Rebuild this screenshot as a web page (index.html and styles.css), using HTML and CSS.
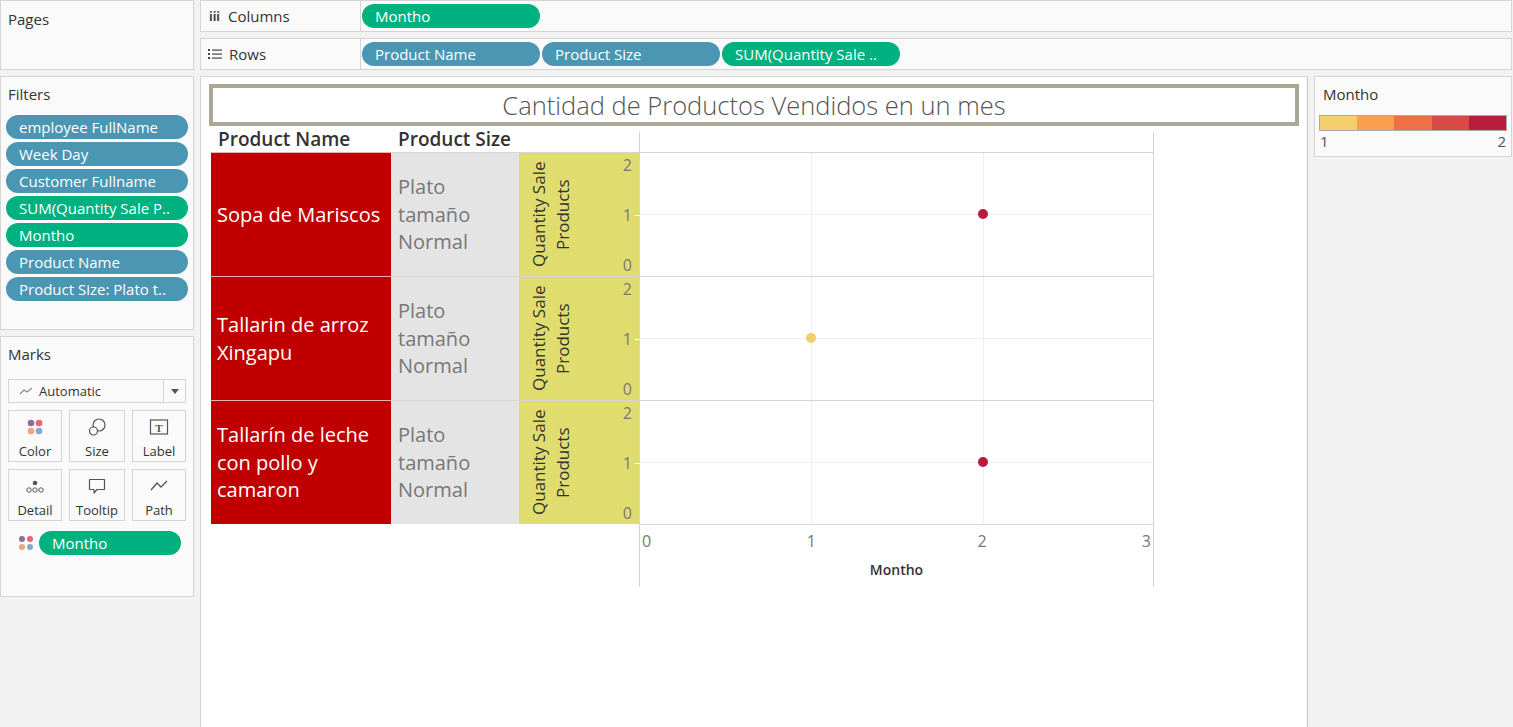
FILE: index.html
```html
<!DOCTYPE html>
<html lang="es">
<head>
<meta charset="utf-8">
<title>Cantidad de Productos Vendidos en un mes</title>
<link rel="stylesheet" href="styles.css">
</head>
<body>
<div class="app">
  <section class="panel pages">
    <div class="panel-title">Pages</div>
  </section>

  <div class="shelves">
    <div class="shelf">
      <div class="shelf-label"><span class="cols-icon">iii</span>Columns</div>
      <div class="shelf-pills"><span class="pill green">Montho</span></div>
    </div>
    <div class="shelf">
      <div class="shelf-label">
        <svg class="rows-icon" width="14" height="12" viewBox="0 0 14 12"><g fill="#444"><rect x="0" y="1" width="2" height="2"/><rect x="0" y="5" width="2" height="2"/><rect x="0" y="9" width="2" height="2"/><rect x="4" y="1.5" width="10" height="1.2"/><rect x="4" y="5.5" width="10" height="1.2"/><rect x="4" y="9.5" width="10" height="1.2"/></g></svg>Rows
      </div>
      <div class="shelf-pills">
        <span class="pill blue">Product Name</span>
        <span class="pill blue">Product Size</span>
        <span class="pill green">SUM(Quantity Sale ..</span>
      </div>
    </div>
  </div>

  <div class="side">
    <section class="panel filters">
      <div class="panel-title">Filters</div>
      <div class="pill-list">
        <span class="pill blue wide">employee FullName</span>
        <span class="pill blue wide">Week Day</span>
        <span class="pill blue wide">Customer Fullname</span>
        <span class="pill green wide">SUM(Quantity Sale P..</span>
        <span class="pill green wide">Montho</span>
        <span class="pill blue wide">Product Name</span>
        <span class="pill blue wide">Product Size: Plato t..</span>
      </div>
    </section>

    <section class="panel marks">
      <div class="panel-title">Marks</div>
      <div class="mark-select">
        <span class="mark-select-value">
          <svg width="14" height="10" viewBox="0 0 14 10"><polyline points="1,8 5,4 8,6 13,2" fill="none" stroke="#888" stroke-width="1.2"/></svg>
          Automatic
        </span>
        <span class="mark-select-arrow"><svg width="8" height="5" viewBox="0 0 8 5"><polygon points="0,0 8,0 4,5" fill="#555"/></svg></span>
      </div>
      <div class="mark-buttons">
        <div class="mark-btn">
          <svg width="20" height="20" viewBox="0 0 20 20"><circle cx="6" cy="6" r="3.3" fill="#8a6f9b"/><circle cx="14" cy="6" r="3.3" fill="#eb6277"/><circle cx="6" cy="14" r="3.3" fill="#f2a378"/><circle cx="14" cy="14" r="3.3" fill="#80a9d3"/></svg>
          <span>Color</span>
        </div>
        <div class="mark-btn">
          <svg width="20" height="20" viewBox="0 0 20 20"><circle cx="12" cy="8" r="6" fill="none" stroke="#555" stroke-width="1.2"/><circle cx="6.5" cy="14" r="4" fill="#fafafa" stroke="#555" stroke-width="1.2"/></svg>
          <span>Size</span>
        </div>
        <div class="mark-btn">
          <svg width="20" height="20" viewBox="0 0 20 20"><rect x="1.5" y="3" width="17" height="14" fill="none" stroke="#555" stroke-width="1.2"/><text x="10" y="14.5" text-anchor="middle" font-family="Liberation Serif, serif" font-weight="bold" font-size="11" fill="#555">T</text></svg>
          <span>Label</span>
        </div>
        <div class="mark-btn">
          <svg width="20" height="20" viewBox="0 0 20 20"><circle cx="10" cy="7" r="2.3" fill="#555"/><circle cx="4" cy="14" r="2.2" fill="none" stroke="#555" stroke-width="1"/><circle cx="10" cy="14" r="2.2" fill="none" stroke="#555" stroke-width="1"/><circle cx="16" cy="14" r="2.2" fill="none" stroke="#555" stroke-width="1"/></svg>
          <span>Detail</span>
        </div>
        <div class="mark-btn">
          <svg width="20" height="20" viewBox="0 0 20 20"><path d="M2.5 3.5 H17.5 V13.5 H10 L7 17 V13.5 H2.5 Z" fill="none" stroke="#555" stroke-width="1.2" stroke-linejoin="round"/></svg>
          <span>Tooltip</span>
        </div>
        <div class="mark-btn">
          <svg width="20" height="20" viewBox="0 0 20 20"><polyline points="2,14 8,7 12,11 18,5" fill="none" stroke="#555" stroke-width="1.3"/></svg>
          <span>Path</span>
        </div>
      </div>
      <div class="mark-field">
        <svg width="16" height="16" viewBox="0 0 16 16"><circle cx="4" cy="4" r="3" fill="#8a6f9b"/><circle cx="12" cy="4" r="3" fill="#eb6277"/><circle cx="4" cy="12" r="3" fill="#f2a378"/><circle cx="12" cy="12" r="3" fill="#80a9d3"/></svg>
        <span class="pill green field">Montho</span>
      </div>
    </section>
  </div>

  <main class="viz">
    <div class="viz-title">Cantidad de Productos Vendidos en un mes</div>
    <div class="table">
      <div class="hdr">Product Name</div>
      <div class="hdr">Product Size</div>
      <div class="hdr"></div>
      <div class="hdr plot-hdr"></div>

      <div class="cell name">Sopa de Mariscos</div>
      <div class="cell size">Plato<br>tamaño<br>Normal</div>
      <div class="cell axis">
        <div class="axis-title">Quantity Sale<br>Products</div>
        <div class="ticks"><span>2</span><span class="tick-1">1</span><span>0</span></div>
      </div>
      <div class="cell plot">
        <svg width="513" height="123" viewBox="0 0 513 123"><g stroke="#efefef" stroke-width="1"><line x1="171.5" y1="0" x2="171.5" y2="123"/><line x1="343.5" y1="0" x2="343.5" y2="123"/><line x1="0" y1="61.5" x2="513" y2="61.5"/></g><circle cx="343" cy="61" r="5" fill="#b91b3d"/></svg>
      </div>

      <div class="cell name">Tallarin de arroz<br>Xingapu</div>
      <div class="cell size">Plato<br>tamaño<br>Normal</div>
      <div class="cell axis">
        <div class="axis-title">Quantity Sale<br>Products</div>
        <div class="ticks"><span>2</span><span class="tick-1">1</span><span>0</span></div>
      </div>
      <div class="cell plot">
        <svg width="513" height="123" viewBox="0 0 513 123"><g stroke="#efefef" stroke-width="1"><line x1="171.5" y1="0" x2="171.5" y2="123"/><line x1="343.5" y1="0" x2="343.5" y2="123"/><line x1="0" y1="61.5" x2="513" y2="61.5"/></g><circle cx="171" cy="61" r="5" fill="#f3cf6a"/></svg>
      </div>

      <div class="cell name">Tallarín de leche<br>con pollo y<br>camaron</div>
      <div class="cell size">Plato<br>tamaño<br>Normal</div>
      <div class="cell axis">
        <div class="axis-title">Quantity Sale<br>Products</div>
        <div class="ticks"><span>2</span><span class="tick-1">1</span><span>0</span></div>
      </div>
      <div class="cell plot">
        <svg width="513" height="123" viewBox="0 0 513 123"><g stroke="#efefef" stroke-width="1"><line x1="171.5" y1="0" x2="171.5" y2="123"/><line x1="343.5" y1="0" x2="343.5" y2="123"/><line x1="0" y1="61.5" x2="513" y2="61.5"/></g><circle cx="343" cy="61" r="5" fill="#b91b3d"/></svg>
      </div>

      <div class="foot"></div>
      <div class="foot"></div>
      <div class="foot"></div>
      <div class="foot x-axis">
        <div class="x-ticks"><span class="xt t0">0</span><span class="xt t1">1</span><span class="xt t2">2</span><span class="xt t3">3</span></div>
        <div class="x-title">Montho</div>
      </div>
    </div>
  </main>

  <aside class="panel legend">
    <div class="panel-title">Montho</div>
    <div class="legend-bar">
      <span style="background:#f2cf6b"></span>
      <span style="background:#f9a04f"></span>
      <span style="background:#ee7049"></span>
      <span style="background:#d84a46"></span>
      <span style="background:#b81d3e"></span>
    </div>
    <div class="legend-labels"><span>1</span><span>2</span></div>
  </aside>
</div>
</body>
</html>
```

FILE: styles.css
```css
* { box-sizing: border-box; }

html, body {
  margin: 0;
  padding: 0;
}

body {
  width: 1513px;
  height: 727px;
  overflow: hidden;
  background: #f2f2f2;
  font-family: "Open Sans", "Noto Sans", "Liberation Sans", sans-serif;
  font-size: 15px;
  color: #333;
}

.app {
  display: grid;
  grid-template-columns: 194px 1108px 198px;
  grid-template-rows: 70px 651px;
  gap: 6px;
}

.panel {
  background: #fafafa;
  border: 1px solid #d4d4d4;
}

.panel-title {
  padding: 9px 0 0 7px;
  line-height: 18px;
  font-size: 15px;
  color: #333;
}

.filters .panel-title,
.marks .panel-title {
  padding-top: 8px;
}

/* shelves */
.shelves {
  grid-column: 2 / 4;
  display: flex;
  flex-direction: column;
  gap: 6px;
}

.shelf {
  height: 32px;
  display: flex;
  background: #fafafa;
  border: 1px solid #d4d4d4;
}

.shelf-label {
  width: 160px;
  border-right: 1px solid #d4d4d4;
  display: flex;
  align-items: center;
  padding-left: 7px;
  font-size: 15px;
  color: #333;
}

.cols-icon {
  font-weight: bold;
  font-size: 12px;
  width: 20px;
  color: #444;
  padding-left: 1px;
}

.rows-icon {
  margin-right: 7px;
}

.shelf-pills {
  display: flex;
  align-items: center;
  gap: 2px;
  padding-left: 1px;
}

.pill {
  display: inline-flex;
  align-items: center;
  height: 24px;
  width: 178px;
  padding-left: 13px;
  border-radius: 12px;
  color: #fff;
  font-size: 15px;
  white-space: nowrap;
  overflow: hidden;
}

.pill.blue { background: #4a96b3; }
.pill.green { background: #00b180; }

/* side */
.side {
  display: flex;
  flex-direction: column;
  gap: 6px;
}

.filters { height: 254px; }

.pill-list {
  display: flex;
  flex-direction: column;
  gap: 3px;
  padding: 12px 5px 0 5px;
}

.pill.wide { width: 182px; }

.marks { height: 261px; }

.mark-select {
  margin: 16px 7px 0 7px;
  height: 24px;
  display: flex;
  border: 1px solid #d4d4d4;
  background: #fafafa;
}

.mark-select-value {
  flex: 1;
  display: flex;
  align-items: center;
  gap: 6px;
  padding-left: 10px;
  font-size: 13px;
  color: #333;
}

.mark-select-arrow {
  width: 22px;
  border-left: 1px solid #d4d4d4;
  display: flex;
  align-items: center;
  justify-content: center;
}

.mark-buttons {
  margin: 7px 7px 0 7px;
  display: grid;
  grid-template-columns: 54px 56px 54px;
  grid-auto-rows: 52px;
  column-gap: 7px;
  row-gap: 7px;
}

.mark-btn {
  border: 1px solid #d4d4d4;
  background: #fafafa;
  display: flex;
  flex-direction: column;
  align-items: center;
  padding-top: 6px;
  font-size: 13px;
  color: #333;
}

.mark-btn span {
  margin-top: 5px;
  line-height: 18px;
}

.mark-field {
  margin-top: 10px;
  display: flex;
  align-items: center;
  padding-left: 17px;
  gap: 5px;
}

.pill.field { width: 142px; }

/* viz */
.viz {
  background: #fff;
  border: 1px solid #d4d4d4;
  border-right-color: #c4c4c4;
  border-bottom: none;
  padding: 7px 8px 0 8px;
}

.viz-title {
  height: 42px;
  border: 4px solid #aca898;
  display: flex;
  align-items: center;
  justify-content: center;
  font-size: 25.5px;
  font-weight: 300;
  color: #555;
}

.table {
  margin: 2px 0 0 2px;
  display: grid;
  grid-template-columns: 180px 128px 120px 515px;
  grid-template-rows: 24px 124px 124px 124px 63px;
}

.hdr {
  font-size: 19px;
  font-weight: 600;
  color: #333;
  padding-left: 7px;
  line-height: 22px;
  white-space: nowrap;
}

.plot-hdr {
  margin-top: 4px;
  border-left: 1px solid #d4d4d4;
  border-right: 1px solid #d4d4d4;
}

.cell {
  border-top: 1px solid #d6d6d6;
}

.name {
  background: #c00000;
  color: #fff;
  font-size: 20px;
  line-height: 27.5px;
  display: flex;
  align-items: center;
  padding-left: 6px;
  border-top-color: #e8b0b0;
}

.size {
  background: #e4e4e4;
  color: #777;
  font-size: 20px;
  line-height: 27.5px;
  display: flex;
  align-items: center;
  padding-left: 7px;
}

.axis {
  background: #e0dd6e;
  display: flex;
}

.axis-title {
  width: 64px;
  writing-mode: vertical-rl;
  transform: rotate(180deg);
  text-align: center;
  font-size: 17px;
  line-height: 24px;
  color: #333;
  display: flex;
  justify-content: center;
  align-items: center;
}

.ticks {
  flex: 1;
  display: flex;
  flex-direction: column;
  justify-content: space-between;
  align-items: flex-end;
  padding: 2px 7px 1px 0;
  font-size: 16px;
  line-height: 20px;
  color: #777;
}

.tick-1 {
  position: relative;
}

.tick-1::after {
  content: "";
  position: absolute;
  left: 12px;
  top: 10px;
  width: 7px;
  height: 1px;
  background: #fff;
}

.plot {
  border-left: 1px solid #d4d4d4;
  border-right: 1px solid #d4d4d4;
  background: #fff;
  line-height: 0;
}

.plot svg { display: block; }

.foot { border-top: 1px solid #d6d6d6; }

.foot:not(.x-axis) { border-top-color: transparent; }

.x-axis {
  border-left: 1px solid #d4d4d4;
  border-right: 1px solid #d4d4d4;
}

.x-ticks {
  position: relative;
  height: 26px;
  font-size: 16px;
  line-height: 20px;
  color: #777;
}

/* tick labels are placed on the data scale (0..3) */
.xt {
  position: absolute;
  top: 6px;
}

.t0 { left: 2px; }
.t1 { left: 33.4%; transform: translateX(-50%); }
.t2 { left: 66.7%; transform: translateX(-50%); }
.t3 { right: 2px; }

.x-title {
  text-align: center;
  font-size: 14px;
  font-weight: 600;
  color: #333;
  line-height: 18px;
  margin-top: 10px;
}

/* legend */
.legend {
  align-self: start;
  height: 81px;
}

.legend .panel-title {
  padding-left: 8px;
  padding-top: 8px;
}

.legend-bar {
  margin: 12px 4px 0 4px;
  height: 16px;
  border: 1px solid #aaa;
  display: flex;
}

.legend-bar span { flex: 1; }

.legend-labels {
  display: flex;
  justify-content: space-between;
  padding: 0 5px 0 5px;
  font-size: 15px;
  line-height: 20px;
  color: #555;
}
```
